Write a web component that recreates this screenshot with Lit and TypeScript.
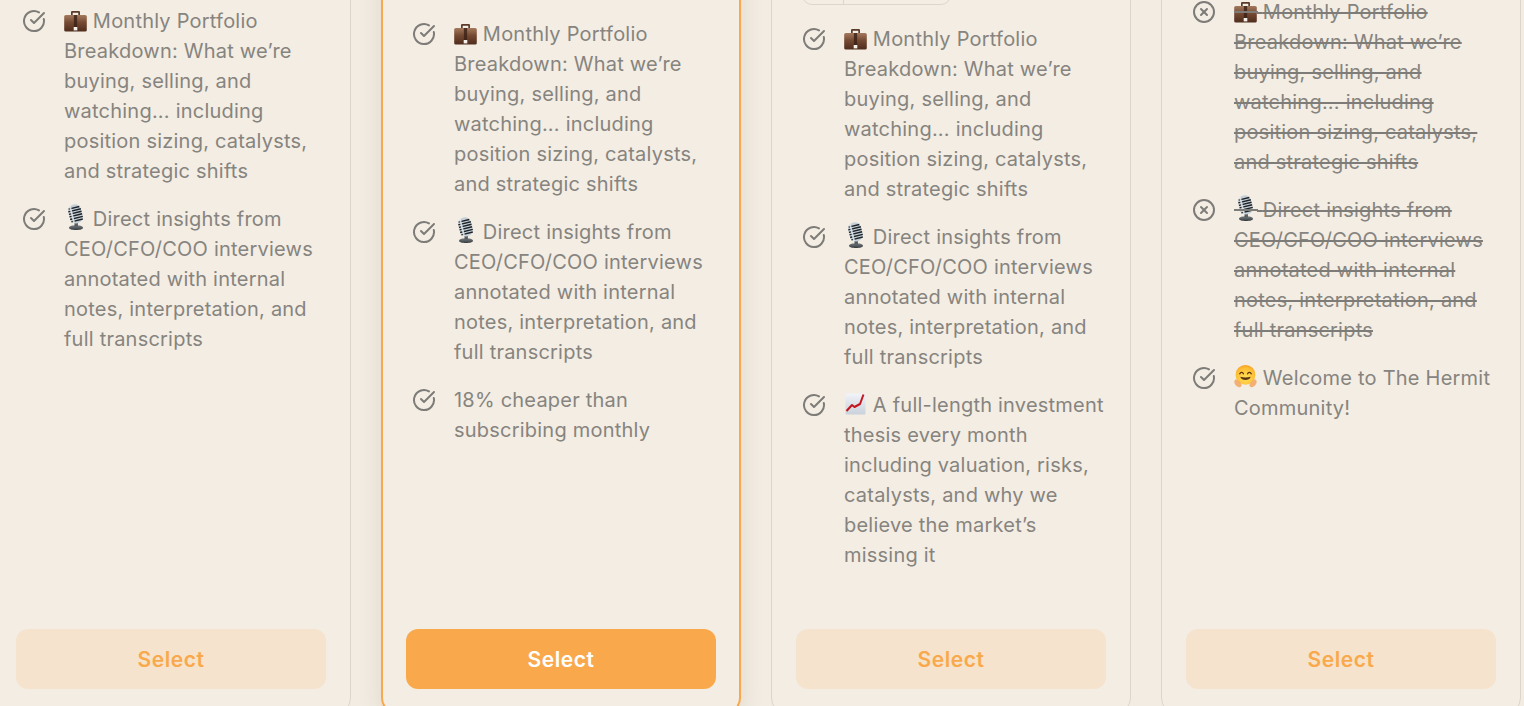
import { LitElement, html, css } from "lit";
import { customElement } from "lit/decorators.js";

const check = html`<svg class="ico" viewBox="0 0 24 24" fill="none" stroke="currentColor" stroke-width="2" stroke-linecap="round" stroke-linejoin="round"><path d="M21.801 10A10 10 0 1 1 17 3.335"/><path d="m9 11 3 3L22 4"/></svg>`;
const cross = html`<svg class="ico" viewBox="0 0 24 24" fill="none" stroke="currentColor" stroke-width="2" stroke-linecap="round" stroke-linejoin="round"><circle cx="12" cy="12" r="10"/><path d="m15 9-6 6"/><path d="m9 9 6 6"/></svg>`;

const briefcase = html`<svg class="emo" viewBox="0 0 23 23"><defs><linearGradient id="bc" x1="0" y1="0" x2="0" y2="1"><stop offset="0" stop-color="#a47a5e"/><stop offset=".45" stop-color="#754a33"/><stop offset="1" stop-color="#4f2c1d"/></linearGradient></defs><path d="M7 6.500V3.200C7 2.400 7.600 2 8.400 2h6.200c.8 0 1.400.4 1.400 1.200v3.300h-1.700V3.700H8.700v2.800z" fill="#5a3a2a"/><rect x="0.200" y="6" width="22.600" height="16.600" rx="1.600" fill="url(#bc)"/><rect x="9.900" y="6" width="3.200" height="13" fill="#3a2015" opacity=".8"/><rect x="9.700" y="18" width="3.600" height="3.400" fill="#f4f1ec"/></svg>`;

const mic = html`<svg class="emo" viewBox="0 0 23 23"><defs><linearGradient id="mb" x1="0" y1="0" x2="0" y2="1"><stop offset="0" stop-color="#7a8186"/><stop offset="1" stop-color="#34393c"/></linearGradient></defs><path d="M5 20.800c0-1.700 3-2.600 7-2.600s7 .9 7 2.600c0 1.400-3 2.200-7 2.200s-7-.8-7-2.200z" fill="url(#mb)"/><rect x="10.500" y="14.500" width="3.400" height="5" fill="#565c60"/><g transform="rotate(-14 11.500 7)"><rect x="5" y="-2.600" width="13" height="19" rx="6" fill="#c4cfd7"/><path d="M6 0.600h11M5 3.200h13M5 5.800h13M5 8.400h13M5 11h13M5.600 13.600h11.800" stroke="#1e2327" stroke-width="1.400"/><path d="M8 -1.800v17.200" stroke="#e3ebf0" stroke-width="1.800" opacity=".85"/></g></svg>`;

const chart = html`<svg class="emo" viewBox="0 0 23 23"><defs><linearGradient id="ct" x1="0" y1="0" x2="0" y2="1"><stop offset="0" stop-color="#f1f4f8"/><stop offset="1" stop-color="#c9d1db"/></linearGradient></defs><rect x="1.500" y="0.500" width="20" height="21" rx="1" fill="url(#ct)"/><path d="M2.500 18l5.500-6 2.500 2 5.500-3 3.500-9.500" fill="none" stroke="#c4161c" stroke-width="2" stroke-linejoin="round"/></svg>`;

const hug = html`<svg class="emo" viewBox="0 0 23 23"><defs><radialGradient id="hg" cx=".5" cy=".65" r=".7"><stop offset="0" stop-color="#ffdf5a"/><stop offset=".7" stop-color="#fdbe34"/><stop offset="1" stop-color="#f5931f"/></radialGradient></defs><circle cx="11.500" cy="8.800" r="9.900" fill="url(#hg)"/><path d="M5.800 7.800c.7-2 2.900-2 3.600 0M13.600 7.800c.7-2 2.900-2 3.600 0" fill="none" stroke="#5a3410" stroke-width="1.300" stroke-linecap="round"/><path d="M6.300 10.800c1.200 4.400 9.200 4.400 10.400 0-3.400.9-7 .9-10.400 0z" fill="#5a3410"/><path d="M.4 15c.6-1.400 2-1.800 3.200-1 1.200.8 3 2.500 3.700 3.900.7 1.400 0 3.100-1.900 3.300-2.400.2-5.700-3.400-5-6.200zM22.600 15c-.6-1.400-2-1.800-3.200-1-1.200.8-3 2.500-3.700 3.900-.7 1.400 0 3.100 1.900 3.300 2.400.2 5.700-3.400 5-6.200z" fill="#f2a765" opacity=".88"/></svg>`;

type Item = { e?: any; t: string; off?: boolean };

const portfolio = "Monthly Portfolio Breakdown: What we’re buying, selling, and watching... including position sizing, catalysts, and strategic shifts";
const insights = "Direct insights from CEO/CFO/COO interviews annotated with internal notes, interpretation, and full transcripts";

const cards: { cls: string; items: Item[] }[] = [
  { cls: "c1", items: [{ e: briefcase, t: portfolio }, { e: mic, t: insights }] },
  { cls: "c2 sel", items: [{ e: briefcase, t: portfolio }, { e: mic, t: insights }, { t: "18% cheaper than subscribing monthly" }] },
  { cls: "c3", items: [
    { e: briefcase, t: portfolio },
    { e: mic, t: insights },
    { e: chart, t: "A full-length investment thesis every month including valuation, risks, catalysts, and why we believe the market’s missing it" },
  ] },
  { cls: "c4", items: [
    { e: briefcase, t: portfolio, off: true },
    { e: mic, t: insights, off: true },
    { e: hug, t: "Welcome to The Hermit Community!" },
  ] },
];

@customElement("app-root")
export class AppRoot extends LitElement {
  static styles = css`
    :host {
      display: block;
      height: 706px;
      overflow: hidden;
      background: #f3ece2;
      font-family: Inter, "Liberation Sans", sans-serif;
    }
    .row {
      display: flex;
      gap: 30px;
      height: 914px;
      margin: -200px 0 0 -9px;
    }
    .card {
      flex: 0 0 360px;
      box-sizing: border-box;
      display: flex;
      flex-direction: column;
      border: 1px solid #dbd5cb;
      border-radius: 16px;
      padding: 24px;
      background: #f4ede3;
    }
    .card.sel {
      border: 2px solid #f9a94c;
      padding: 23px;
      box-shadow: 0 4px 24px rgba(60, 45, 20, 0.1);
    }
    .head {
      flex: none;
      display: flex;
      flex-direction: column;
      justify-content: flex-end;
    }
    .c1 .head { height: 181px; }
    .c2 .head { height: 194px; }
    .c3 .head { height: 199px; }
    .c4 .head { height: 172px; }
    .pill {
      display: flex;
      box-sizing: border-box;
      width: 149px;
      height: 40px;
      margin: 0 0 19px 6px;
      border: 1px solid #dcd7cc;
      border-radius: 10px;
    }
    .pill span { width: 40px; border-right: 1px solid #dcd7cc; }
    ul {
      list-style: none;
      margin: 0;
      padding: 0 0 0 6px;
      display: flex;
      flex-direction: column;
      gap: 18px;
      color: #86847f;
      font-size: 20px;
      line-height: 30px;
      letter-spacing: 0.22px;
    }
    li { display: flex; gap: 18px; }
    .ico {
      flex: none;
      width: 24px;
      height: 24px;
      margin-top: 3px;
      color: #7e7c78;
    }
    .txt { flex: 1; min-width: 0; }
    .off { text-decoration: line-through; text-decoration-thickness: 2px; text-decoration-color: #7e7c78; }
    .emw {
      display: inline-block;
      position: relative;
      width: 23px;
      height: 23px;
      vertical-align: -4px;
      letter-spacing: 0;
    }
    .off .emw::after {
      content: "";
      position: absolute;
      left: 0;
      right: -1px;
      top: 11px;
      height: 2px;
      background: #7e7c78;
    }
    .emo {
      display: block;
      width: 23px;
      height: 23px;
      overflow: visible;
    }
    button {
      margin-top: auto;
      flex: none;
      height: 60px;
      border: 0;
      border-radius: 12px;
      background: #f5e3cd;
      color: #f9a94c;
      font: 600 21px Inter, "Liberation Sans", sans-serif;
      letter-spacing: 0.6px;
    }
    .sel button { background: #f9a94c; color: #fff; }
  `;

  render() {
    return html`<div class="row">
      ${cards.map(
        (c) => html`<section class="card ${c.cls}">
          <div class="head">${c.cls === "c3" ? html`<div class="pill"><span></span></div>` : ""}</div>
          <ul>
            ${c.items.map(
              (i) => html`<li>
                ${i.off ? cross : check}
                <div class="txt ${i.off ? "off" : ""}">${i.e ? html`<span class="emw">${i.e}</span> ` : ""}${i.t}</div>
              </li>`
            )}
          </ul>
          <button>Select</button>
        </section>`
      )}
    </div>`;
  }
}
